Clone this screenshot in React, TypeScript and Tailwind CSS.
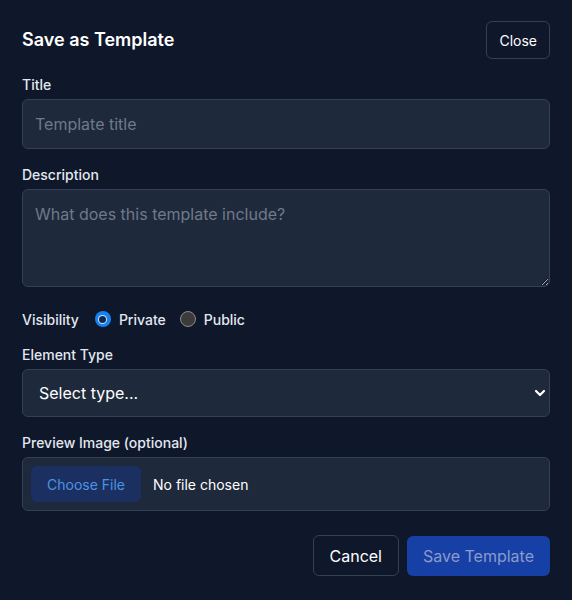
import React from "react";

export default function App() {
  return (
    <div
      className="min-h-[600px] w-full bg-[#0f172a] px-[22px] pt-[21px] text-[#e2e8f0]"
      style={{ fontFamily: "Inter, 'Liberation Sans', sans-serif" }}
    >
      <div className="flex h-[38px] items-center justify-between">
        <h2 className="text-[18px] font-semibold leading-none text-white">Save as Template</h2>
        <button className="h-[38px] rounded-md border border-[#334155] px-3 text-[14px] text-white">
          Close
        </button>
      </div>

      <label className="mt-4 block text-[14px] font-medium leading-5 text-[#e2e8f0]">Title</label>
      <input
        type="text"
        placeholder="Template title"
        className="mt-1 block h-[50px] w-full rounded-md border border-[#334155] bg-[#1e293b] px-3 text-[16px] text-white outline-none placeholder:text-[#6f7a8a]"
      />

      <label className="mt-4 block text-[14px] font-medium leading-5 text-[#e2e8f0]">Description</label>
      <textarea
        placeholder="What does this template include?"
        className="mt-1 block h-[98px] w-full resize-y rounded-md border border-[#334155] bg-[#1e293b] px-3 py-3 text-[16px] leading-6 text-white outline-none [color-scheme:dark] placeholder:text-[#6f7a8a]"
      />

      <div className="mt-[22px] flex h-5 items-center text-[14px] font-medium">
        <span className="text-[#e2e8f0]">Visibility</span>
        <span className="ml-4 flex items-center gap-2">
          <span className="flex h-4 w-4 items-center justify-center rounded-full bg-[#1683f2]">
            <span className="h-[7px] w-[7px] rounded-full bg-[#0e2a52] ring-1 ring-[#cfe3ff]" />
          </span>
          <span className="text-[#e2e8f0]">Private</span>
        </span>
        <span className="ml-[14px] flex items-center gap-2">
          <span className="h-4 w-4 rounded-full border border-[#8a8a8a] bg-[#3b3b3b]" />
          <span className="text-[#e2e8f0]">Public</span>
        </span>
      </div>

      <label className="mt-4 block text-[14px] font-medium leading-5 text-[#e2e8f0]">Element Type</label>
      <div className="relative mt-1">
        <select className="block h-[48px] w-full appearance-none rounded-md border border-[#334155] bg-[#1e293b] pl-4 pr-8 text-[16px] text-white outline-none">
          <option>Select type...</option>
        </select>
        <svg
          className="pointer-events-none absolute right-[4px] top-1/2 -translate-y-1/2"
          width="12"
          height="8"
          viewBox="0 0 12 8"
          fill="none"
        >
          <path d="M2 2l4 4 4-4" stroke="white" strokeWidth="2.2" strokeLinecap="round" strokeLinejoin="round" />
        </svg>
      </div>

      <label className="mt-4 block text-[14px] font-medium leading-5 text-[#e2e8f0]">Preview Image (optional)</label>
      <div className="mt-1 flex h-[54px] w-full items-center rounded-md border border-[#334155] bg-[#1e293b] px-2">
        <span className="flex h-9 items-center rounded-md bg-[#1b3060] px-4 text-[14px] text-[#4b93e6]">
          Choose File
        </span>
        <span className="ml-3 text-[14px] text-white">No file chosen</span>
      </div>

      <div className="mt-6 flex items-center justify-end gap-2">
        <button className="h-[41px] rounded-md border border-[#334155] px-4 text-[16px] text-white">
          Cancel
        </button>
        <button className="h-10 rounded-md bg-[#1740a6] px-4 text-[16px] text-[#8a9bc9]">
          Save Template
        </button>
      </div>
    </div>
  );
}
